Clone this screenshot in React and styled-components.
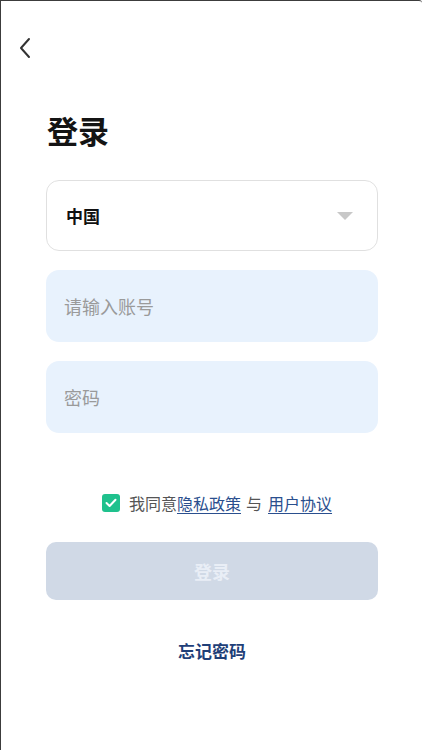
import React, { useState } from 'react';
import styled, { createGlobalStyle } from 'styled-components';

const GlobalStyle = createGlobalStyle`
  html, body {
    margin: 0;
    padding: 0;
    background: #ffffff;
  }
  body {
    font-family: "Noto Sans CJK SC", "Noto Sans", sans-serif;
  }
`;

function App() {
  const [agreed, setAgreed] = useState(true);

  return (
    <>
      <GlobalStyle />
      <Screen>
        <TopBar>
          <BackButton aria-label="back">
            <svg width="14" height="22" viewBox="0 0 14 22" fill="none">
              <path d="M11 2 L3 11 L11 20" stroke="#333" strokeWidth="2" strokeLinecap="round" strokeLinejoin="round" />
            </svg>
          </BackButton>
        </TopBar>

        <Content>
          <Title>登录</Title>

          <Select>
            <SelectText>中国</SelectText>
            <Caret />
          </Select>

          <Field>
            <Input placeholder="请输入账号" />
          </Field>
          <Field>
            <Input type="password" placeholder="密码" />
          </Field>

          <Agreement>
            <CheckBox checked={agreed} onClick={() => setAgreed(!agreed)}>
              {agreed && (
                <svg width="12" height="10" viewBox="0 0 12 10" fill="none">
                  <path d="M1.5 5 L4.6 8 L10.5 1.8" stroke="#fff" strokeWidth="2" strokeLinecap="round" strokeLinejoin="round" />
                </svg>
              )}
            </CheckBox>
            <span>我同意</span>
            <Link href="#">隐私政策</Link>
            <Spacer>与</Spacer>
            <Link href="#">用户协议</Link>
          </Agreement>

          <LoginButton disabled>登录</LoginButton>

          <Forgot href="#">忘记密码</Forgot>
        </Content>
      </Screen>
    </>
  );
}

export default App;

const Screen = styled.div`
  width: 422px;
  height: 750px;
  box-sizing: border-box;
  border-top: 1px solid #3c3c3c;
  border-left: 1px solid #3c3c3c;
  border-top-right-radius: 3px;
  background: #fff;
  overflow: hidden;
`;

const TopBar = styled.div`
  height: 70px;
  display: flex;
  align-items: flex-start;
  padding: 35px 0 0 17px;
  box-sizing: border-box;
`;

const BackButton = styled.button`
  border: none;
  background: none;
  padding: 0;
  width: 20px;
  height: 24px;
  display: flex;
  align-items: center;
  cursor: pointer;
`;

const Content = styled.div`
  display: flex;
  flex-direction: column;
  padding: 0 44px 0 45px;
`;

const Title = styled.h1`
  margin: 37px 0 0 1px;
  font-size: 31px;
  line-height: 44px;
  font-weight: 700;
  color: #141414;
`;

const Select = styled.div`
  margin-top: 28px;
  height: 71px;
  box-sizing: border-box;
  border: 1px solid #e0e0e0;
  border-radius: 13px;
  display: flex;
  align-items: center;
  justify-content: space-between;
  padding: 0 24px 0 19px;
`;

const SelectText = styled.span`
  font-size: 17px;
  font-weight: 700;
  color: #111;
`;

const Caret = styled.span`
  width: 0;
  height: 0;
  border-left: 8px solid transparent;
  border-right: 8px solid transparent;
  border-top: 8px solid #c8c8c8;
`;

const Field = styled.div`
  margin-top: 19px;
  height: 72px;
  border-radius: 13px;
  background: #e8f2fd;
  display: flex;
  align-items: center;
  padding: 0 18px;
`;

const Input = styled.input`
  flex: 1;
  padding: 0;
  border: none;
  outline: none;
  background: transparent;
  font-family: "Noto Sans CJK SC", "Noto Sans", sans-serif;
  font-size: 18px;
  color: #222;

  &::placeholder {
    color: #9a9a9a;
  }
`;

const Agreement = styled.div`
  margin-top: 59px;
  display: flex;
  align-items: center;
  justify-content: center;
  font-size: 16px;
  line-height: 22px;
  color: #555;
  padding-left: 10px;
`;

const CheckBox = styled.span`
  width: 18px;
  height: 18px;
  border-radius: 3px;
  background: ${(p) => (p.checked ? '#1fc18d' : '#fff')};
  border: ${(p) => (p.checked ? 'none' : '1px solid #bbb')};
  display: flex;
  align-items: center;
  justify-content: center;
  margin-right: 9px;
  cursor: pointer;
`;

const Link = styled.a`
  color: #2a4f8e;
  text-decoration: underline;
  text-underline-offset: 3px;
`;

const Spacer = styled.span`
  margin: 0 6px 0 5px;
  color: #555;
`;

const LoginButton = styled.button`
  margin-top: 28px;
  height: 58px;
  border: none;
  border-radius: 10px;
  background: #d0d9e6;
  color: #e9eef6;
  font-family: "Noto Sans CJK SC", "Noto Sans", sans-serif;
  font-size: 18px;
  font-weight: 700;
`;

const Forgot = styled.a`
  margin-top: 38px;
  align-self: center;
  font-size: 17px;
  font-weight: 700;
  color: #1f3f78;
  text-decoration: none;
`;
